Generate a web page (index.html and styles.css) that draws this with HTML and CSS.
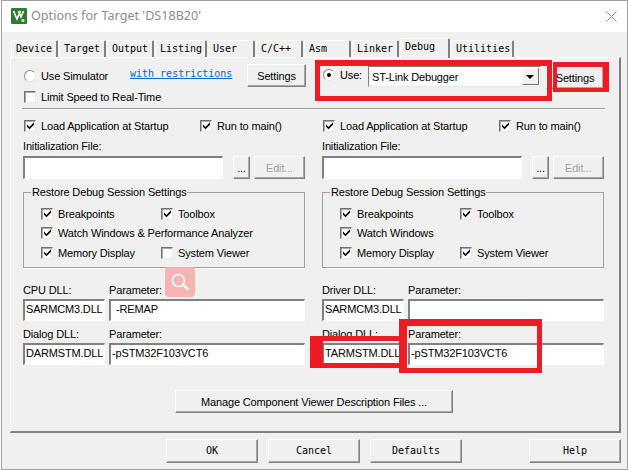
FILE: index.html
```html
<!DOCTYPE html>
<html lang="en">
<head>
<meta charset="utf-8">
<title>Options for Target</title>
<link rel="stylesheet" href="styles.css">
</head>
<body>
<svg class="defs" width="0" height="0"><symbol id="tick" viewBox="0 0 9 9"><path d="M1 3.5 3.5 6 8 1.2V3.8L3.5 8.3 1 5.8Z" fill="#000"/></symbol></svg>
<div class="dialog">
  <header class="titlebar">
    <svg class="appicon" viewBox="0 0 16 16"><rect width="16" height="16" rx="1" fill="#2e7d32"/><path d="M2.5 3 6 11 9.5 3M7.5 3 10 9 12.5 3" fill="none" stroke="#fff" stroke-width="1.6"/><circle cx="12" cy="12.5" r="1.6" fill="#cfe8c8"/></svg>
    <span class="title">Options for Target 'DS18B20'</span>
    <svg class="close" viewBox="0 0 11 11"><path d="M.5.5 10.5 10.5M10.5.5.5 10.5" stroke="#8a8a8a" fill="none"/></svg>
  </header>
  <nav class="tabs">
    <span class="tab w47">Device</span><span class="tab w47">Target</span><span class="tab w47">Output</span><span class="tab w53">Listing</span><span class="tab w47">User</span><span class="tab w47">C/C++</span><span class="tab w47">Asm</span><span class="tab w47">Linker</span><span class="tab active">Debug</span><span class="tab w63">Utilities</span>
  </nav>
  <main class="panel">
    <section class="cols top">
      <div class="col">
        <div class="row r-sim">
          <label class="opt"><i class="radio"></i>Use Simulator</label>
          <a class="link">with restrictions</a>
          <button class="btn settings">Settings</button>
        </div>
        <label class="opt limit"><i class="box"></i>Limit Speed to Real-Time</label>
      </div>
      <div class="col">
        <div class="row r-use">
          <label class="opt"><i class="radio on"></i>Use:</label>
          <div class="combo"><span>ST-Link Debugger</span><b class="arrow"></b></div>
          <button class="btn settings2">Settings</button>
        </div>
      </div>
    </section>
    <hr class="rule">
    <section class="cols">
      <div class="col">
        <div class="row r-load">
          <label class="opt"><i class="box"><svg><use href="#tick"/></svg></i>Load Application at Startup</label>
          <label class="opt run"><i class="box"><svg><use href="#tick"/></svg></i>Run to main()</label>
        </div>
        <div class="cap">Initialization File:</div>
        <div class="row r-file"><div class="field file"></div><button class="btn dots">...</button><button class="btn edit" disabled>Edit...</button></div>
        <fieldset class="group">
          <legend>Restore Debug Session Settings</legend>
          <div class="grow"><label class="opt c1"><i class="box"><svg><use href="#tick"/></svg></i>Breakpoints</label><label class="opt"><i class="box"><svg><use href="#tick"/></svg></i>Toolbox</label></div>
          <div class="grow"><label class="opt"><i class="box"><svg><use href="#tick"/></svg></i>Watch Windows &amp; Performance Analyzer</label></div>
          <div class="grow"><label class="opt c1"><i class="box"><svg><use href="#tick"/></svg></i>Memory Display</label><label class="opt"><i class="box"></i>System Viewer</label></div>
        </fieldset>
        <div class="dll">
          <span class="cap">CPU DLL:</span><span class="cap">Parameter:</span>
          <div class="field">SARMCM3.DLL</div><div class="field ind">-REMAP</div>
          <span class="cap">Dialog DLL:</span><span class="cap">Parameter:</span>
          <div class="field">DARMSTM.DLL</div><div class="field">-pSTM32F103VCT6</div>
        </div>
      </div>
      <div class="col">
        <div class="row r-load">
          <label class="opt"><i class="box"><svg><use href="#tick"/></svg></i>Load Application at Startup</label>
          <label class="opt run"><i class="box"><svg><use href="#tick"/></svg></i>Run to main()</label>
        </div>
        <div class="cap">Initialization File:</div>
        <div class="row r-file"><div class="field file"></div><button class="btn dots">...</button><button class="btn edit" disabled>Edit...</button></div>
        <fieldset class="group">
          <legend>Restore Debug Session Settings</legend>
          <div class="grow"><label class="opt c1"><i class="box"><svg><use href="#tick"/></svg></i>Breakpoints</label><label class="opt"><i class="box"><svg><use href="#tick"/></svg></i>Toolbox</label></div>
          <div class="grow"><label class="opt"><i class="box"><svg><use href="#tick"/></svg></i>Watch Windows</label></div>
          <div class="grow"><label class="opt c1"><i class="box"><svg><use href="#tick"/></svg></i>Memory Display</label><label class="opt"><i class="box"><svg><use href="#tick"/></svg></i>System Viewer</label></div>
        </fieldset>
        <div class="dll">
          <span class="cap">Driver DLL:</span><span class="cap">Parameter:</span>
          <div class="field">SARMCM3.DLL</div><div class="field"></div>
          <span class="cap">Dialog DLL:</span><span class="cap">Parameter:</span>
          <div class="field">TARMSTM.DLL</div><div class="field">-pSTM32F103VCT6</div>
        </div>
      </div>
    </section>
    <div class="manage"><button class="btn wide">Manage Component Viewer Description Files ...</button></div>
  </main>
  <footer class="actions">
    <button class="btn mono">OK</button><button class="btn mono">Cancel</button><button class="btn mono">Defaults</button><button class="btn mono help">Help</button>
  </footer>
</div>
<i class="mark m1"></i><i class="mark m2"></i><i class="mark m3"></i><i class="mark m4"></i>
<div class="badge"><svg viewBox="0 0 20 20"><circle cx="8.5" cy="8.5" r="6" fill="none" stroke="#fff" stroke-width="1.6"/><path d="M13 13 18 17" stroke="#fff" stroke-width="2.4" stroke-linecap="round"/></svg></div>
</body>
</html>
```
FILE: styles.css
```css
* { box-sizing: border-box; }
html, body { margin: 0; padding: 0; background: #fff; }
body { position: relative; width: 628px; height: 470px; overflow: hidden; font: 11px/14px "Liberation Sans", Arial, sans-serif; letter-spacing: -0.15px; color: #000; }
.defs { position: absolute; }
.dialog { margin-left: 1px; width: 627px; height: 470px; border: 1px solid #a0a0a0; background: #f0f0f0; display: flex; flex-direction: column; }
.titlebar { height: 31px; flex: none; background: #fff; display: flex; align-items: center; padding: 0 10px 1px 9px; }
.appicon { width: 16px; height: 16px; }
.title { margin-left: 4px; font-family: "Noto Sans", sans-serif; font-size: 12.6px; letter-spacing: 0; color: #8c8c8c; }
.close { width: 11px; height: 11px; margin-left: auto; }

.tabs { height: 25px; flex: none; display: flex; align-items: flex-end; padding-left: 9px; gap: 1px; position: relative; z-index: 1; }
.tab { height: 17px; font: 10px/16px "DejaVu Sans Mono", monospace; letter-spacing: 0; padding-left: 4px; border: 1px solid #fff; border-bottom: 0; border-right: 2px solid #808080; border-radius: 2px 2px 0 0; }
.w47 { width: 47px; } .w53 { width: 52px; } .w63 { width: 63px; }
.tab.active { width: 50px; height: 20px; background: #f0f0f0; margin-bottom: -1px; line-height: 15px; }

.panel { margin-left: 8px; width: 611px; height: 376px; flex: none; border: 1px solid #fff; border-right: 2px solid #808080; border-bottom: 2px solid #808080; padding: 6px 0 0 12px; }
.cols { display: grid; grid-template-columns: 299px 282px; }
.top { height: 44px; }
.col { min-width: 0; }
.row { display: flex; align-items: center; }
.opt { display: inline-flex; align-items: center; gap: 5px; white-space: nowrap; }
.box { width: 12px; height: 12px; flex: none; background: #fff; border: 1px solid; border-color: #707070 #e8e8e8 #e8e8e8 #707070; box-shadow: inset 1px 1px 0 #a8a8a8; display: block; margin-left: 1px; }
.box svg { display: block; width: 9px; height: 9px; margin: 0 0 0 1px; }
.radio { width: 12px; height: 12px; flex: none; border-radius: 50%; background: #fff; border: 1px solid #8a8a8a; border-right-color: #e4e4e4; border-bottom-color: #e4e4e4; display: block; margin-left: 1px; position: relative; }
.radio.on::after { content: ""; position: absolute; left: 3px; top: 3px; width: 4px; height: 4px; border-radius: 50%; background: #000; }

.r-sim { height: 23px; }
.r-sim .opt { width: 83px; }
.link { margin-left: 24px; width: 102px; white-space: nowrap; font: 10px/14px "DejaVu Sans Mono", monospace; letter-spacing: 0; color: #0066cc; text-decoration: underline; position: relative; top: -2px; }
.limit { margin-top: 3px; }
.btn { font: inherit; letter-spacing: inherit; color: #000; background: #f0f0f0; padding: 0; border: 1px solid; border-color: #fff #808080 #808080 #fff; box-shadow: inset -1px -1px 0 #a8a8a8; display: block; }
.settings { width: 59px; height: 23px; margin-left: 15px; }
.r-use { margin-top: 2px; height: 22px; align-items: flex-start; }
.r-use .opt { margin-top: 2px; width: 46px; }
.combo { width: 173px; height: 21px; background: #fff; border: 1px solid; border-color: #808080 #e8e8e8 #e8e8e8 #808080; display: flex; align-items: center; padding-left: 3px; justify-content: space-between; }
.arrow { width: 17px; height: 17px; margin-right: 1px; background: #f0f0f0; border: 1px solid; border-color: #fff #707070 #707070 #fff; position: relative; }
.arrow::after { content: ""; position: absolute; left: 3px; top: 6px; border: 4px solid transparent; border-top: 4px solid #000; border-bottom: 0; }
.settings2 { width: 58px; height: 23px; margin-left: 5px; }

.rule { margin: 0 0 0 -1px; width: 583px; height: 2px; border: 0; border-top: 1px solid #a0a0a0; border-bottom: 1px solid #fff; }

.r-load { height: 14px; margin-top: 9px; }
.r-load .opt:first-child { width: 176px; }
.cap { display: block; margin-top: 6px; height: 14px; white-space: nowrap; }
.r-file { margin-top: 3px; height: 23px; }
.field { height: 23px; background: #fff; border: 2px solid; border-color: #808080 #fff #fff #808080; border-right-width: 1px; border-bottom-width: 1px; padding: 1px 0 0 1px; overflow: hidden; white-space: nowrap; }
.file { width: 200px; }
.dots { width: 17px; height: 23px; margin-left: 10px; line-height: 18px; }
.edit { width: 51px; height: 23px; margin-left: 4px; color: #9a9a9a; text-shadow: 1px 1px 0 #fff; }

.group { margin: 6px 0 0; width: 282px; height: 83px; padding: 5px 0 0 16px; border: 1px solid #a0a0a0; box-shadow: 0 1px 0 #fff; }
.group legend { padding: 0 1px; margin-left: -9px; font: inherit; letter-spacing: inherit; }
.grow { display: flex; height: 19.5px; align-items: center; }
.c1 { width: 120px; }

.dll { display: grid; grid-template-columns: 82px 196px; column-gap: 4px; margin-top: 12px; }
.dll .cap { margin-top: 0; height: 19px; line-height: 14px; padding-top: 3px; }
.dll .cap:nth-child(n+5) { height: 22px; padding-top: 6px; }
.dll .field { height: 22px; }
.ind { padding-left: 5px; }

.manage { margin-top: 25px; padding-left: 152px; }
.wide { width: 278px; height: 23px; }

.actions { height: 38px; display: flex; align-items: flex-start; padding: 6px 0 0 164px; gap: 10px; }
.mono { width: 92px; height: 24px; font: 10px/20px "DejaVu Sans Mono", monospace; letter-spacing: 0; }
.help { margin-left: 57px; }

.mark { position: absolute; display: block; border: 5px solid #ed1c24; }
.m1 { left: 315px; top: 60px; width: 237px; height: 41px; border-top-width: 6px; }
.m2 { left: 553px; top: 62px; width: 56px; height: 30px; border-width: 5px 6px 4px 4px; }
.m3 { left: 399px; top: 319px; width: 143px; height: 54px; border-width: 7px 5px 5px 8px; }
.m4 { left: 310px; top: 336px; width: 92px; height: 32px; border-left-width: 13px; border-right-width: 0; }
.badge { position: absolute; left: 165px; top: 267px; width: 30px; height: 30px; border-radius: 4px; background: #f4b4b4; display: flex; align-items: center; justify-content: center; }
.badge svg { width: 20px; height: 20px; }
```
